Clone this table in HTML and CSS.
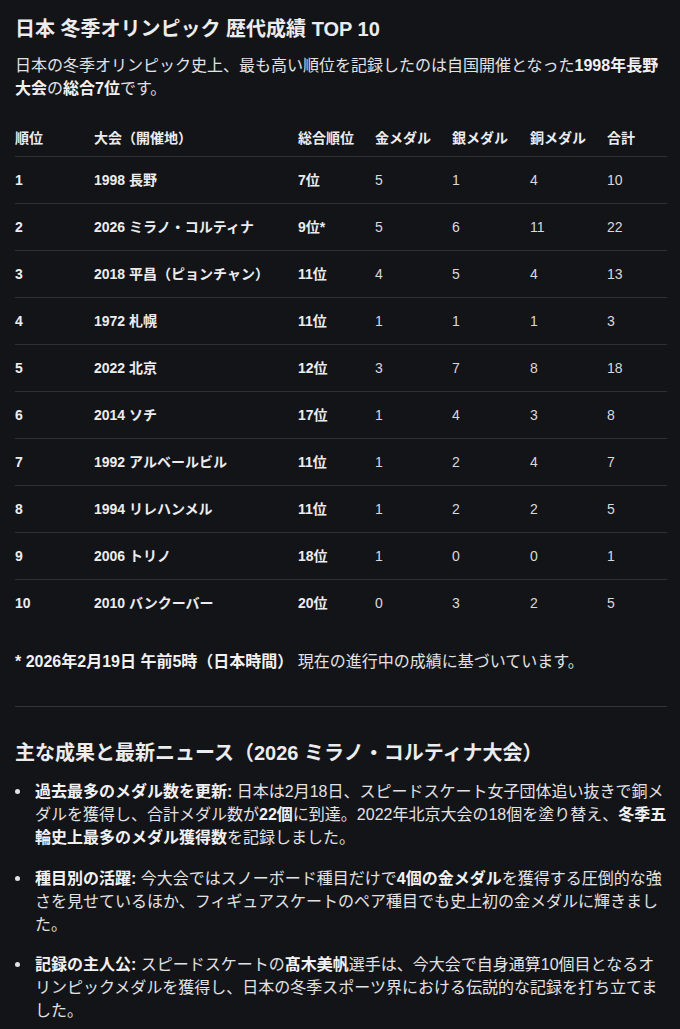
FILE: index.html
```html
<!DOCTYPE html>
<html lang="ja">
<head>
<meta charset="utf-8">
<title>日本 冬季オリンピック 歴代成績 TOP 10</title>
<link rel="stylesheet" href="styles.css">
</head>
<body>
<main class="page">
  <h1 class="title">日本 冬季オリンピック 歴代成績 TOP 10</h1>
  <p class="lead">日本の冬季オリンピック史上、最も高い順位を記録したのは自国開催となった<b>1998年長野大会</b>の<b>総合7位</b>です。</p>

  <table class="results">
    <colgroup>
      <col class="c1"><col class="c2"><col class="c3"><col class="c4"><col class="c5"><col class="c6"><col class="c7">
    </colgroup>
    <thead>
      <tr><th>順位</th><th>大会（開催地）</th><th>総合順位</th><th>金メダル</th><th>銀メダル</th><th>銅メダル</th><th>合計</th></tr>
    </thead>
    <tbody>
      <tr><td class="b">1</td><td class="b">1998 長野</td><td class="b">7位</td><td>5</td><td>1</td><td>4</td><td>10</td></tr>
      <tr><td class="b">2</td><td class="b">2026 ミラノ・コルティナ</td><td class="b">9位*</td><td>5</td><td>6</td><td>11</td><td>22</td></tr>
      <tr><td class="b">3</td><td class="b">2018 平昌（ピョンチャン）</td><td class="b">11位</td><td>4</td><td>5</td><td>4</td><td>13</td></tr>
      <tr><td class="b">4</td><td class="b">1972 札幌</td><td class="b">11位</td><td>1</td><td>1</td><td>1</td><td>3</td></tr>
      <tr><td class="b">5</td><td class="b">2022 北京</td><td class="b">12位</td><td>3</td><td>7</td><td>8</td><td>18</td></tr>
      <tr><td class="b">6</td><td class="b">2014 ソチ</td><td class="b">17位</td><td>1</td><td>4</td><td>3</td><td>8</td></tr>
      <tr><td class="b">7</td><td class="b">1992 アルベールビル</td><td class="b">11位</td><td>1</td><td>2</td><td>4</td><td>7</td></tr>
      <tr><td class="b">8</td><td class="b">1994 リレハンメル</td><td class="b">11位</td><td>1</td><td>2</td><td>2</td><td>5</td></tr>
      <tr><td class="b">9</td><td class="b">2006 トリノ</td><td class="b">18位</td><td>1</td><td>0</td><td>0</td><td>1</td></tr>
      <tr><td class="b">10</td><td class="b">2010 バンクーバー</td><td class="b">20位</td><td>0</td><td>3</td><td>2</td><td>5</td></tr>
    </tbody>
  </table>

  <p class="note"><b>* 2026年2月19日 午前5時（日本時間）</b> 現在の進行中の成績に基づいています。</p>

  <hr class="rule">

  <h2 class="subtitle">主な成果と最新ニュース（2026 ミラノ・コルティナ大会）</h2>
  <ul class="news">
    <li><b>過去最多のメダル数を更新:</b> 日本は2月18日、スピードスケート女子団体追い抜きで銅メダルを獲得し、合計メダル数が<b>22個</b>に到達。2022年北京大会の18個を塗り替え、<b>冬季五輪史上最多のメダル獲得数</b>を記録しました。</li>
    <li><b>種目別の活躍:</b> 今大会ではスノーボード種目だけで<b>4個の金メダル</b>を獲得する圧倒的な強さを見せているほか、フィギュアスケートのペア種目でも史上初の金メダルに輝きました。</li>
    <li><b>記録の主人公:</b> スピードスケートの<b>髙木美帆</b>選手は、今大会で自身通算10個目となるオリンピックメダルを獲得し、日本の冬季スポーツ界における伝説的な記録を打ち立てました。</li>
  </ul>
</main>
</body>
</html>
```

FILE: styles.css
```css
html, body {
  margin: 0;
  padding: 0;
  background: #131418;
}

body {
  font-family: "Liberation Sans", "Noto Sans CJK JP", sans-serif;
  color: #e2e2e4;
  font-size: 16px;
}

.page {
  padding: 15px 13px 0 15px;
}

b {
  font-weight: 700;
  color: #f1f1f3;
}

.title {
  margin: 0;
  font-size: 20px;
  line-height: 28px;
  font-weight: 700;
  color: #ececee;
}

.lead {
  margin: 11px 0 0;
  line-height: 23px;
}

.results {
  width: 652px;
  margin-top: 19px;
  border-collapse: collapse;
  table-layout: fixed;
  font-size: 14px;
}

.c1 { width: 79px; }
.c2 { width: 204px; }
.c3 { width: 77px; }
.c4 { width: 77px; }
.c5 { width: 78px; }
.c6 { width: 77px; }
.c7 { width: 60px; }

.results th {
  text-align: left;
  font-weight: 700;
  color: #ececee;
  padding: 9px 6px 8px 0;
  line-height: 20px;
  border-bottom: 1px solid #2f3035;
  white-space: nowrap;
}

.results td {
  padding: 13px 6px 13px 0;
  line-height: 20px;
  border-bottom: 1px solid #2f3035;
  color: #d9d9dc;
  white-space: nowrap;
}

.results td.b {
  font-weight: 700;
  color: #ececee;
}

.results tbody tr:last-child td {
  border-bottom: none;
}

.note {
  margin: 24px 0 0;
  line-height: 24px;
}

.rule {
  margin: 32px 0 0;
  border: none;
  border-top: 1px solid #34353a;
  height: 0;
}

.subtitle {
  margin: 32px 0 0;
  font-size: 20px;
  line-height: 28px;
  font-weight: 700;
  color: #ececee;
}

.news {
  list-style: none;
  margin: 13px 0 0;
  padding: 0 0 0 20px;
}

.news li {
  position: relative;
  line-height: 23px;
  margin-bottom: 17.5px;
}

.news li::before {
  content: "";
  position: absolute;
  left: -20px;
  top: 9px;
  width: 5px;
  height: 5px;
  border-radius: 50%;
  background: #e2e2e4;
}
```
